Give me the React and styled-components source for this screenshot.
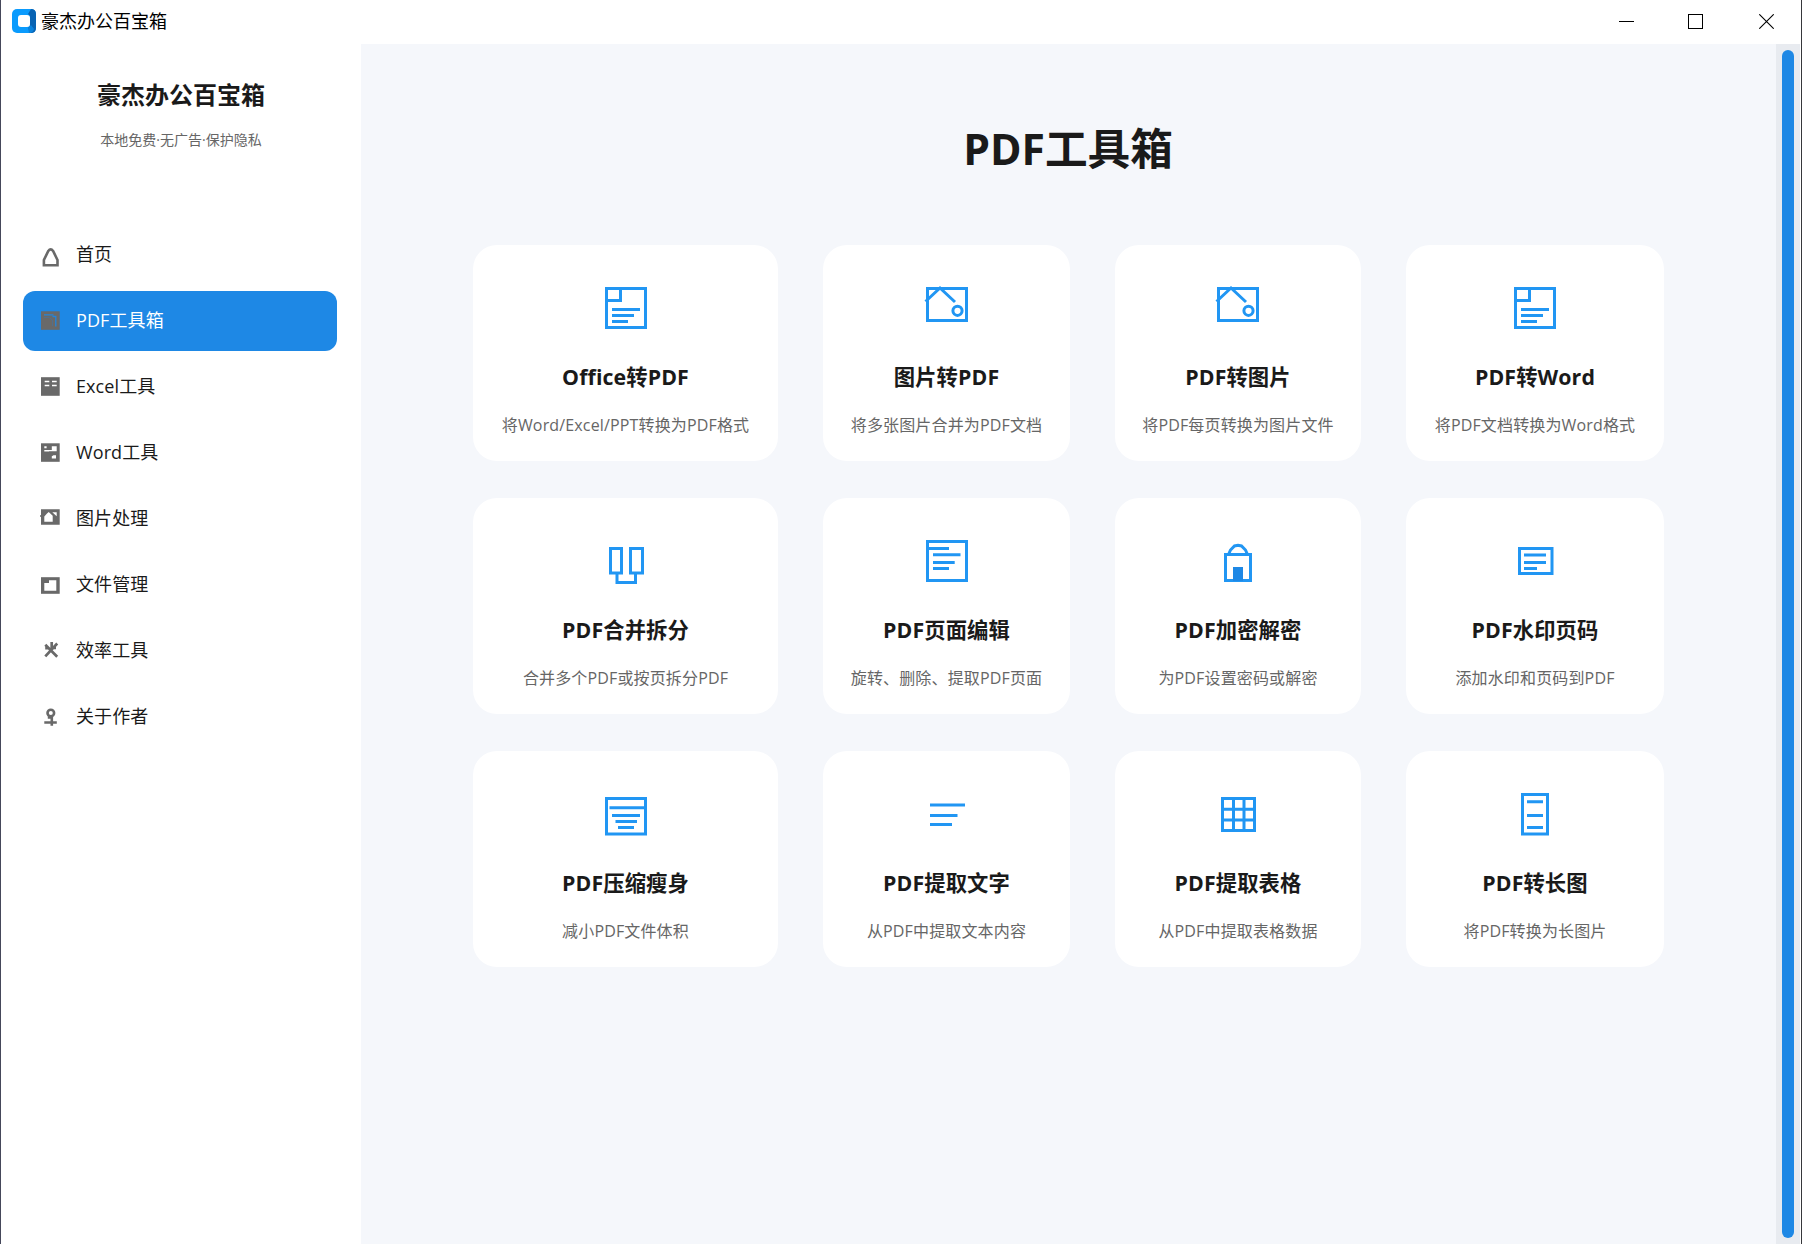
import React from 'react';
import styled, { createGlobalStyle } from 'styled-components';

const GlobalStyle = createGlobalStyle`
  * { box-sizing: border-box; }

  body {
    margin: 0;
    overflow: hidden;
    font-family: "Open Sans", "Noto Sans CJK SC", sans-serif;
    color: #1a1a1a;
  }
`;

const Window = styled.div`
  display: flex;
  flex-direction: column;
  width: 100vw;
  height: 100vh;
  background: #fff;
  border-left: 1px solid #45475a;
  border-right: 1px solid #36373b;
`;

const TitleBar = styled.header`
  display: flex;
  align-items: center;
  flex: 0 0 44px;
  padding: 0 27px 2px 11px;
`;

const AppName = styled.span`
  flex: 1;
  margin-left: 5px;
  font-size: 18px;
  line-height: 26px;
  color: #000;
`;

const WindowControls = styled.div`
  display: flex;
  gap: 54px;

  svg { display: block; }
  svg:last-child { margin-left: 2px; }
`;

const Body = styled.div`
  display: flex;
  flex: 1;
  min-height: 0;
`;

const Sidebar = styled.aside`
  flex: 0 0 360px;
  padding: 34px 24px 0 22px;
`;

const Brand = styled.div`
  height: 147px;
  padding-left: 2px;
  text-align: center;
`;

const BrandName = styled.h1`
  margin: 0;
  font-size: 24px;
  line-height: 34px;
  font-weight: 700;
`;

const Slogan = styled.p`
  margin: 18px 0 0;
  font-size: 14px;
  line-height: 20px;
  color: #666;
`;

const Nav = styled.nav`
  display: flex;
  flex-direction: column;
  gap: 6px;
`;

const NavItem = styled.a`
  display: flex;
  align-items: center;
  gap: 13px;
  height: 60px;
  padding-left: 16px;
  border-radius: 12px;
  font-size: 18px;
  letter-spacing: 0.1px;
  background: ${({ $active }) => ($active ? '#1e88e5' : 'transparent')};
  color: ${({ $active }) => ($active ? '#fff' : '#1a1a1a')};
`;

const NavLabel = styled.span`
  margin-bottom: 4px;
`;

const NavSvg = styled.svg`
  width: 24px;
  height: 24px;
  color: #696969;
`;

const Main = styled.main`
  flex: 1;
  background: #f5f7fb;
`;

const PageTitle = styled.h2`
  margin: 75px 0 66px;
  padding-right: 1px;
  font-size: 42.67px;
  line-height: 60px;
  font-weight: 700;
  text-align: center;
`;

const CardGrid = styled.div`
  display: grid;
  grid-template-columns: 305px 247px 246px 258px;
  grid-auto-rows: 216px;
  gap: 37px 45px;
  justify-content: center;
`;

const Card = styled.article`
  display: flex;
  flex-direction: column;
  align-items: center;
  padding-top: 32px;
  background: #fff;
  border-radius: 24px;
  white-space: nowrap;
`;

const CardSvg = styled.svg`
  width: 60px;
  height: 60px;
  fill: none;
  stroke: #2196f3;
  stroke-width: 3;
`;

const CardTitle = styled.h3`
  margin: 26px 0 0;
  font-size: 21.33px;
  line-height: 28px;
  letter-spacing: 0.1px;
  font-weight: 700;
`;

const CardText = styled.p`
  margin: 23px 0 0;
  font-size: 16px;
  line-height: 22px;
  letter-spacing: 0.15px;
  color: #666;
`;

const ScrollTrack = styled.div`
  flex: 0 0 24px;
  margin-right: 1px;
  padding: 6px;
  background: #e8ebf0;
`;

const ScrollThumb = styled.div`
  height: 100%;
  border-radius: 6px;
  background: #1e88e5;
`;

const docIcon = (
  <>
    <rect x="10.5" y="11.5" width="39" height="39" />
    <path d="M10.5 23.5H24.5V11.5M16 32.5H44M16 38.5H38M16 44.5H32" />
  </>
);

const pictureIcon = (
  <>
    <rect x="10.5" y="11.5" width="39" height="32" />
    <path d="M8.5 24.5L23 11L38 25" />
    <circle cx="40.5" cy="33.8" r="4.6" />
  </>
);

const tools = [
  { title: 'Office转PDF', text: '将Word/Excel/PPT转换为PDF格式', icon: docIcon },
  { title: '图片转PDF', text: '将多张图片合并为PDF文档', icon: pictureIcon },
  { title: 'PDF转图片', text: '将PDF每页转换为图片文件', icon: pictureIcon },
  { title: 'PDF转Word', text: '将PDF文档转换为Word格式', icon: docIcon },
  {
    title: 'PDF合并拆分',
    text: '合并多个PDF或按页拆分PDF',
    icon: (
      <>
        <rect x="14.5" y="18.5" width="11" height="24.5" />
        <rect x="34.5" y="18.5" width="12" height="24.5" />
        <path d="M21 43V52.5H39.5V43" />
      </>
    ),
  },
  {
    title: 'PDF页面编辑',
    text: '旋转、删除、提取PDF页面',
    icon: (
      <>
        <rect x="10.5" y="11.5" width="39" height="39" />
        <path d="M10.5 18.5H32M16 24.7H43.5M16 32.5H37.7M16 38.5H32" />
      </>
    ),
  },
  {
    title: 'PDF加密解密',
    text: '为PDF设置密码或解密',
    icon: (
      <>
        <rect x="17.5" y="24.5" width="25" height="26" />
        <path d="M20.5 24.5L22.5 20L26.5 16L30 15.3L33.5 16L37.5 20L39.5 24.5" />
        <rect x="25" y="37" width="10" height="14" fill="#1e88e5" stroke="none" />
      </>
    ),
  },
  {
    title: 'PDF水印页码',
    text: '添加水印和页码到PDF',
    icon: (
      <>
        <rect x="14.5" y="18.5" width="32.5" height="25" />
        <path d="M19 25H41M19 32.5H41M19 38.5H32" />
      </>
    ),
  },
  {
    title: 'PDF压缩瘦身',
    text: '减小PDF文件体积',
    icon: (
      <>
        <rect x="10.5" y="15.5" width="39" height="35.5" />
        <path d="M13.5 24.7H50M16 32.5H44M19.5 38.5H41M22 44.5H38" />
      </>
    ),
  },
  {
    title: 'PDF提取文字',
    text: '从PDF中提取文本内容',
    icon: <path d="M13 22H48M13 32.5H40.5M13 41.5H35" />,
  },
  {
    title: 'PDF提取表格',
    text: '从PDF中提取表格数据',
    icon: (
      <>
        <rect x="14.5" y="15.5" width="32" height="32" />
        <path d="M25.5 15.5V47.5M36 15.5V47.5M14.5 26.3H46.5M14.5 37H46.5" />
      </>
    ),
  },
  {
    title: 'PDF转长图',
    text: '将PDF转换为长图片',
    icon: (
      <>
        <rect x="17.5" y="11.5" width="25" height="39.5" />
        <path d="M22 18.8H38M22 32.5H38M22 44.5H38" />
      </>
    ),
  },
];

const menu = [
  {
    label: '首页',
    icon: (
      <path
        d="M4.9 22.3V17L9.3 8Q11.7 4.7 14.1 8L18.5 17V22.3Z"
        fill="none"
        stroke="currentColor"
        strokeWidth="2.6"
      />
    ),
  },
  {
    label: 'PDF工具箱',
    active: true,
    icon: (
      <>
        <rect x="2" y="2.3" width="18.7" height="18.5" fill="currentColor" />
        <path d="M5 5.8H14.5M13.5 7.5H16.8V17.5" fill="none" stroke="#2485da" strokeWidth="1.3" />
        <path d="M5 8.5H10L13.5 11V17" fill="none" stroke="#4f7192" strokeWidth="0.8" />
      </>
    ),
  },
  {
    label: 'Excel工具',
    icon: (
      <>
        <rect x="2" y="2.2" width="18.7" height="18.6" fill="currentColor" />
        <path d="M5.7 6.5H10.3M13 6.5H17.7M5.7 10.5H10.3M13 10.5H17.7" stroke="#fff" strokeWidth="1.4" />
      </>
    ),
  },
  {
    label: 'Word工具',
    icon: (
      <>
        <rect x="2" y="2.3" width="18.7" height="18.5" fill="currentColor" />
        <path
          d="M5.3 5.3H7.6V7.3H5.3ZM5.3 9H10V10.5H5.3ZM12.8 5.3H17.7V10.3H10V8.9H12.8ZM12.8 15.2L14.5 14.3H17V17.5H12.8Z"
          fill="#fff"
        />
      </>
    ),
  },
  {
    label: '图片处理',
    icon: (
      <>
        <path d="M2 2.3H20.7V17.8H2V9.8H1V8.2H2Z" fill="currentColor" />
        <path d="M5.3 14.7V9.5L8 6.5L9.7 5L13.7 8.7V14.7ZM13.3 5.2H17.7V9.3Z" fill="#fff" />
      </>
    ),
  },
  {
    label: '文件管理',
    icon: (
      <>
        <rect x="2" y="4.2" width="18.7" height="16.6" fill="currentColor" />
        <path d="M10 7.2H17.3V17.7H5.3V10H10Z" fill="#fff" />
      </>
    ),
  },
  {
    label: '效率工具',
    icon: (
      <path
        d="M6.3 5.8L18.2 17.8M6.3 17.3L18.2 4.5M12.7 3V11M6.2 9.2H10M14 9H17"
        fill="none"
        stroke="currentColor"
        strokeWidth="2.7"
      />
    ),
  },
  {
    label: '关于作者',
    icon: (
      <g fill="none" stroke="currentColor" strokeWidth="2.6">
        <circle cx="11.8" cy="8" r="3.3" />
        <path d="M12.8 11.3V20.7M5.3 17.5H17.8M8.8 12.5H12.8" />
      </g>
    ),
  },
];

function Logo() {
  return (
    <svg width="24" height="24" viewBox="0 0 24 24">
      <rect width="24" height="24" rx="5" fill="#0a9bfd" />
      <path d="M16 5L19 0Q24 0 24 5V19Q24 24 19 24L16 19L18 17V7Z" fill="#0863b3" />
      <path d="M16 19L19 16L22 20Q21 24 17 24Z" fill="#0a82dc" />
      <rect x="6" y="6" width="12" height="12" rx="3" fill="#fff" />
    </svg>
  );
}

function App() {
  return (
    <Window>
      <GlobalStyle />
      <TitleBar>
        <Logo />
        <AppName>豪杰办公百宝箱</AppName>
        <WindowControls>
          <svg width="15" height="15">
            <path d="M0 7.5H15" stroke="#000" />
          </svg>
          <svg width="15" height="15">
            <rect x="0.5" y="0.5" width="14" height="14" fill="none" stroke="#000" />
          </svg>
          <svg width="15" height="15">
            <path d="M0.3 0.3L14.7 14.7M14.7 0.3L0.3 14.7" stroke="#000" strokeWidth="1.1" />
          </svg>
        </WindowControls>
      </TitleBar>
      <Body>
        <Sidebar>
          <Brand>
            <BrandName>豪杰办公百宝箱</BrandName>
            <Slogan>本地免费·无广告·保护隐私</Slogan>
          </Brand>
          <Nav>
            {menu.map((item) => (
              <NavItem key={item.label} $active={item.active}>
                <NavSvg viewBox="0 0 24 24">{item.icon}</NavSvg>
                <NavLabel>{item.label}</NavLabel>
              </NavItem>
            ))}
          </Nav>
        </Sidebar>
        <Main>
          <PageTitle>PDF工具箱</PageTitle>
          <CardGrid>
            {tools.map((tool) => (
              <Card key={tool.title}>
                <CardSvg viewBox="0 0 60 60">{tool.icon}</CardSvg>
                <CardTitle>{tool.title}</CardTitle>
                <CardText>{tool.text}</CardText>
              </Card>
            ))}
          </CardGrid>
        </Main>
        <ScrollTrack>
          <ScrollThumb />
        </ScrollTrack>
      </Body>
    </Window>
  );
}

export default App;
